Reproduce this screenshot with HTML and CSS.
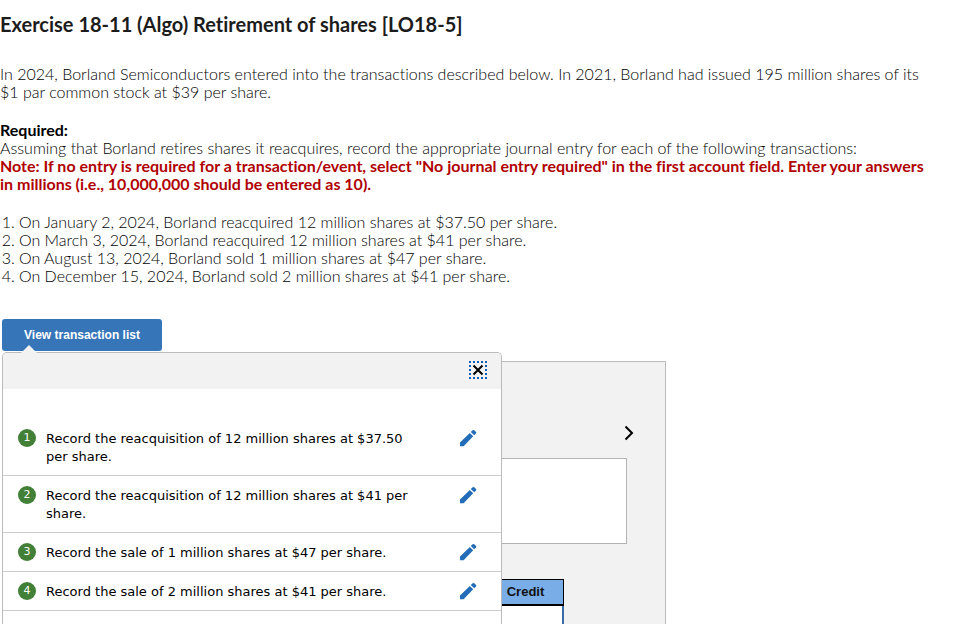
FILE: index.html
```html
<!DOCTYPE html>
<html lang="en">
<head>
<meta charset="utf-8">
<meta name="viewport" content="width=device-width, initial-scale=1">
<title>Exercise 18-11</title>
<link rel="stylesheet" href="styles.css">
</head>
<body>
<svg class="sprite" aria-hidden="true">
  <symbol id="pencil" viewBox="0 0 18 18">
    <path d="M1 17.2V13.6L10.8 4L14.2 7.2L4.6 17.2Z"/>
    <path d="M11.8 3L13.6 1.3Q14.4 .7 15.2 1.3L17 3.1Q17.6 3.9 17 4.6L15.2 6.2Z"/>
  </symbol>
</svg>
<main class="page">
  <h1 class="title">Exercise 18-11 (Algo) Retirement of shares [LO18-5]</h1>
  <div class="prose">
    <p>In 2024, Borland Semiconductors entered into the transactions described below. In 2021, Borland had issued 195 million shares of its $1 par common stock at $39 per share.</p>
    <div>
      <h2 class="required">Required:</h2>
      <p>Assuming that Borland retires shares it reacquires, record the appropriate journal entry for each of the following transactions:</p>
      <p class="note">Note: If no entry is required for a transaction/event, select "No journal entry required" in the first account field. Enter your answers in millions (i.e., 10,000,000 should be entered as 10).</p>
    </div>
    <ol class="events">
      <li>On January 2, 2024, Borland reacquired 12 million shares at $37.50 per share.</li>
      <li>On March 3, 2024, Borland reacquired 12 million shares at $41 per share.</li>
      <li>On August 13, 2024, Borland sold 1 million shares at $47 per share.</li>
      <li>On December 15, 2024, Borland sold 2 million shares at $41 per share.</li>
    </ol>
  </div>
  <section class="workspace">
    <button class="view-list" type="button">View transaction list</button>
    <div class="worksheet">
      <button class="next" type="button" aria-label="Next entry">
        <svg width="10" height="16" viewBox="0 0 10 16"><path d="M1.5 1.5L8 8L1.5 14.5"/></svg>
      </button>
      <div class="entry"></div>
      <table class="journal">
        <thead><tr><td></td><th scope="col">Credit</th></tr></thead>
        <tbody><tr><td></td><td></td></tr></tbody>
      </table>
    </div>
    <div class="popup">
      <div class="popup-bar">
        <button class="close" type="button" aria-label="Close">
          <svg width="20" height="20" viewBox="0 0 20 20">
            <path class="dots" d="M1 2H19M1 18H19M2 1V19M18 1V19"/>
            <path d="M5.5 5.5L14.5 14.5M14.5 5.5L5.5 14.5"/>
          </svg>
        </button>
      </div>
      <ul class="records">
        <li><span class="badge">1</span><span class="label">Record the reacquisition of 12 million shares at $37.50 per share.</span><button class="edit" type="button" aria-label="Edit 1"><svg width="18" height="18"><use href="#pencil"/></svg></button></li>
        <li><span class="badge">2</span><span class="label">Record the reacquisition of 12 million shares at $41 per share.</span><button class="edit" type="button" aria-label="Edit 2"><svg width="18" height="18"><use href="#pencil"/></svg></button></li>
        <li><span class="badge">3</span><span class="label">Record the sale of 1 million shares at $47 per share.</span><button class="edit" type="button" aria-label="Edit 3"><svg width="18" height="18"><use href="#pencil"/></svg></button></li>
        <li><span class="badge">4</span><span class="label">Record the sale of 2 million shares at $41 per share.</span><button class="edit" type="button" aria-label="Edit 4"><svg width="18" height="18"><use href="#pencil"/></svg></button></li>
      </ul>
    </div>
  </section>
</main>
</body>
</html>
```
FILE: styles.css
```css
* { box-sizing: border-box; }

body {
  margin: 0;
  background: #fff;
  color: #000;
  font: 300 16px/18px Lato, "Liberation Sans", sans-serif;
  font-variant-ligatures: none;
}

button { margin: 0; padding: 0; border: 0; background: none; cursor: pointer; }
svg { display: block; }
.sprite { position: absolute; width: 0; height: 0; }

.page { display: flex; flex-direction: column; min-height: 100vh; }

.title { margin: 0; padding: 11px 0 28px; color: #1c1c1c; font-size: 20px; line-height: 26px; font-weight: 700; }

.prose { display: flex; flex-direction: column; gap: 20px; max-width: 938px; }
.prose p { margin: 0; }
.required { margin: 0; font-size: 16px; line-height: 18px; }
.prose .note { color: #b00000; font-weight: 700; }
.events { margin: 0; padding-left: 19px; }

.workspace {
  position: relative;
  display: flex;
  flex: 1;
  flex-direction: column;
  align-items: flex-start;
  gap: 10px;
  margin-top: 34px;
  padding-left: 2px;
}

.view-list {
  width: 160px;
  height: 32px;
  border-radius: 3px;
  background: #3775b9;
  color: #fff;
  font: bold 12px/32px "Liberation Sans", sans-serif;
}

.worksheet {
  flex: 1;
  width: 100%;
  max-width: 664px;
  padding: 60px 38px 0 20px;
  border: 1px solid #bbb;
  border-width: 1px 1px 0 0;
  background: #f2f2f2;
}
.next { display: block; margin-left: auto; padding: 3px 0 3px 3px; margin-right: -7px; }
.next path { fill: none; stroke: #000; stroke-width: 2; }
.entry { height: 86px; margin-top: 14px; border: 1px solid #b3b3b3; background: #fff; }

.journal { width: calc(100% - 63px); margin-top: 35px; border-collapse: separate; border-spacing: 0; table-layout: fixed; }
.journal thead td, .journal th {
  height: 27px;
  padding: 0;
  border: solid #000;
  border-width: 1px 1px 2px 0;
  background: #78ade8;
}
.journal th { width: 76px; color: #111; font: bold 13px/24px "Liberation Sans", sans-serif; }
.journal tbody td { height: 18px; padding: 0; border-right: 2px solid #3a6ea5; background: #fff; }

.popup {
  position: absolute;
  top: 33px;
  bottom: 0;
  left: 2px;
  width: 500px;
  max-width: calc(100% - 4px);
  border: 1px solid #bbb;
  border-bottom: 0;
  border-radius: 5px 5px 0 0;
  background: #fff;
}
.popup::before {
  content: "";
  position: absolute;
  top: -8px;
  left: 18px;
  border: solid transparent;
  border-width: 0 8px 8px;
  border-bottom-color: #f2f2f2;
}
.popup-bar { display: flex; justify-content: flex-end; padding: 7px 13px 9px; border-radius: 4px 4px 0 0; background: #f2f2f2; }
.close path { fill: none; stroke: #000; stroke-width: 2; }
.close .dots { stroke: #005cb9; stroke-dasharray: 2 2; }

.records { margin: 0; padding: 30px 0 0; list-style: none; font: 13px/18px "DejaVu Sans", sans-serif; }
.records li { display: flex; align-items: flex-start; gap: 10px; padding: 10px 24px 9px 15px; border-bottom: 1px solid #ccc; }
.badge { flex: none; width: 18px; height: 18px; border-radius: 50%; background: #418036; color: #fff; font-size: 11px; text-align: center; }
.label { flex: 1; padding: 1px 40px 0 0; }
.edit { fill: #236cb8; }
```
